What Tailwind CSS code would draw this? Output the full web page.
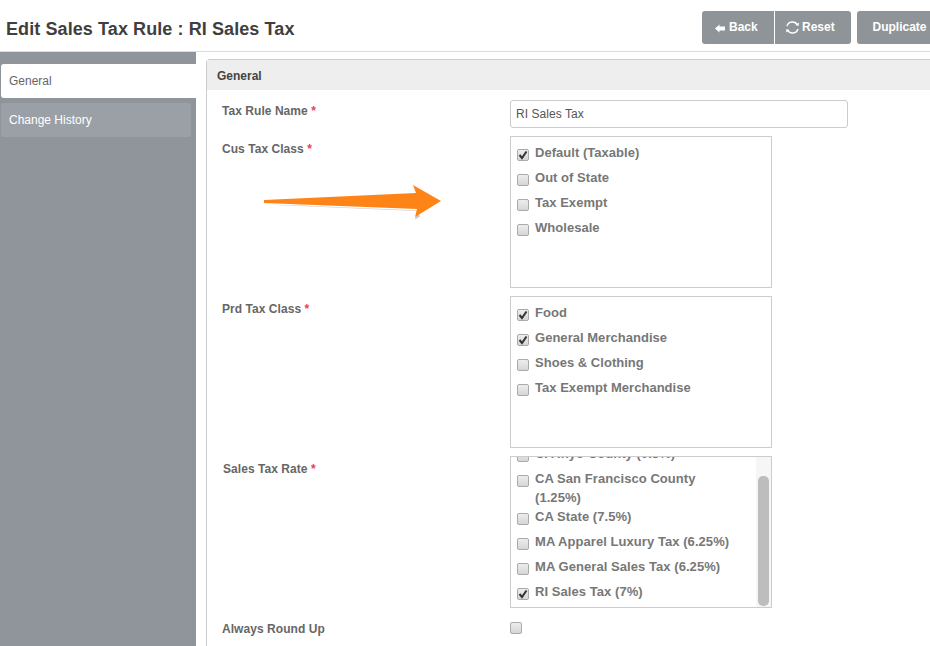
<!DOCTYPE html>
<html lang="en">

<head>
    <meta charset="UTF-8">
    <title>Edit Sales Tax Rule</title>
    <script src="https://cdn.jsdelivr.net/npm/@tailwindcss/browser@4"></script>
</head>

<body class="bg-white font-['Liberation_Sans',Arial,sans-serif] overflow-hidden">
    <div class="relative w-[930px] h-[646px] overflow-hidden">

        <!-- Header -->
        <header class="h-[52px] flex items-start justify-between border-b border-[#dcdcdc]">
            <h1 class="pl-[6px] pt-[18px] text-[18px] leading-[22px] font-bold tracking-[0.09px] text-[#3f3f3f] whitespace-nowrap">Edit Sales Tax Rule : RI Sales Tax</h1>
            <div class="flex pt-[11px] -mr-[10px]">
                <button class="w-[72px] h-[33px] pb-px pl-[13px] flex items-center gap-[4px] bg-[#8f9499] rounded-l-[3px] text-white text-[12px] font-bold">
                    <svg width="10" height="9" viewBox="0 0 10 9" class="mt-[2px]"><path d="M0 4.500 4.500 .5V2.500H10V6.500H4.500V8.500Z" fill="#fff"/></svg>
                    Back
                </button>
                <button class="w-[76px] h-[33px] ml-px pb-px pl-[10px] flex items-center gap-[2px] bg-[#8f9499] rounded-r-[3px] text-white text-[12px] font-bold">
                    <svg width="15" height="15" viewBox="0 0 15 15" fill="none" stroke="#fff" stroke-width="1.500" class="mt-px"><path d="M2 6A5.700 5.700 0 0 1 12.500 5M13 9A5.700 5.700 0 0 1 2.500 10"/><path d="M14 2.500 13.500 6 10.500 5" fill="#fff" stroke="none"/><path d="M1 12.500 1.500 9 4.500 10" fill="#fff" stroke="none"/></svg>
                    Reset
                </button>
                <button class="w-[83px] h-[33px] ml-[6px] pb-px pl-[2px] bg-[#8f9499] rounded-[3px] text-white text-[12px] font-bold">Duplicate</button>
            </div>
        </header>

        <div class="flex h-[594px]">
            <!-- Sidebar -->
            <aside class="w-[196px] shrink-0 bg-[#8f959b] pt-[12px] pl-px">
                <div class="h-[34px] flex items-center pl-[8px] bg-white rounded-l-[3px] text-[12px] text-[#666]">General</div>
                <div class="mt-[5px] mr-[5px] h-[34px] flex items-center pl-[8px] bg-[#9ba0a7] rounded-[3px] text-[12px] text-white">Change History</div>
            </aside>

            <!-- Main panel -->
            <main class="flex-1 pl-[10px] pt-[7px]">
                <section class="h-[600px] border-l border-t border-[#ccc] rounded-tl-[4px]">
                    <h2 class="h-[30px] pt-px flex items-center pl-[10px] bg-[#eeeeee] text-[12px] font-bold text-[#444]">General</h2>

                    <div class="grid grid-cols-[288px_1fr] pl-[15px] pt-[10px] text-[12px] font-bold tracking-[0.05px] text-[#666]">
                        <div class="pt-[4px] leading-[14px]">Tax Rule Name <span class="text-[#f03a5f]">*</span></div>
                        <div class="h-[36px]">
                            <div class="w-[338px] h-[28px] flex items-center pl-[5px] border border-[#ccc] rounded-[3px] font-normal text-[#555]">RI Sales Tax</div>
                        </div>

                        <div class="pt-[6px] leading-[14px]">Cus Tax Class <span class="text-[#f03a5f]">*</span></div>
                        <div class="h-[160px]">
                            <div class="w-[262px] h-[152px] border border-[#ccc] pl-[6px] pt-[3px] text-[13px] tracking-[0.03px] text-[#777]">
                                <div class="h-[25px] flex items-center gap-[6px]"><span class="w-[12px] h-[12px] mt-[5px] flex items-center justify-center border border-[#aaa] rounded-[2px] bg-linear-to-b from-[#ededed] to-[#d6d6d6]"><svg width="10" height="10" viewBox="0 0 10 10"><path d="M1.500 5 4 8 8.500 1.500" fill="none" stroke="#333" stroke-width="2"/></svg></span>Default (Taxable)</div>
                                <div class="h-[25px] flex items-center gap-[6px]"><span class="w-[12px] h-[12px] mt-[5px] border border-[#aaa] rounded-[2px] bg-linear-to-b from-[#ededed] to-[#d6d6d6]"></span>Out of State</div>
                                <div class="h-[25px] flex items-center gap-[6px]"><span class="w-[12px] h-[12px] mt-[5px] border border-[#aaa] rounded-[2px] bg-linear-to-b from-[#ededed] to-[#d6d6d6]"></span>Tax Exempt</div>
                                <div class="h-[25px] flex items-center gap-[6px]"><span class="w-[12px] h-[12px] mt-[5px] border border-[#aaa] rounded-[2px] bg-linear-to-b from-[#ededed] to-[#d6d6d6]"></span>Wholesale</div>
                            </div>
                        </div>

                        <div class="pt-[6px] leading-[14px]">Prd Tax Class <span class="text-[#f03a5f]">*</span></div>
                        <div class="h-[160px]">
                            <div class="w-[262px] h-[152px] border border-[#ccc] pl-[6px] pt-[3px] text-[13px] tracking-[0.03px] text-[#777]">
                                <div class="h-[25px] flex items-center gap-[6px]"><span class="w-[12px] h-[12px] mt-[5px] flex items-center justify-center border border-[#aaa] rounded-[2px] bg-linear-to-b from-[#ededed] to-[#d6d6d6]"><svg width="10" height="10" viewBox="0 0 10 10"><path d="M1.500 5 4 8 8.500 1.500" fill="none" stroke="#333" stroke-width="2"/></svg></span>Food</div>
                                <div class="h-[25px] flex items-center gap-[6px]"><span class="w-[12px] h-[12px] mt-[5px] flex items-center justify-center border border-[#aaa] rounded-[2px] bg-linear-to-b from-[#ededed] to-[#d6d6d6]"><svg width="10" height="10" viewBox="0 0 10 10"><path d="M1.500 5 4 8 8.500 1.500" fill="none" stroke="#333" stroke-width="2"/></svg></span>General Merchandise</div>
                                <div class="h-[25px] flex items-center gap-[6px]"><span class="w-[12px] h-[12px] mt-[5px] border border-[#aaa] rounded-[2px] bg-linear-to-b from-[#ededed] to-[#d6d6d6]"></span>Shoes &amp; Clothing</div>
                                <div class="h-[25px] flex items-center gap-[6px]"><span class="w-[12px] h-[12px] mt-[5px] border border-[#aaa] rounded-[2px] bg-linear-to-b from-[#ededed] to-[#d6d6d6]"></span>Tax Exempt Merchandise</div>
                            </div>
                        </div>

                        <div class="pt-[6px] pl-px leading-[14px]">Sales Tax Rate <span class="text-[#f03a5f]">*</span></div>
                        <div class="h-[166px]">
                            <div class="relative w-[262px] h-[152px] border border-[#ccc] pl-[6px] text-[13px] tracking-[0.06px] text-[#777] overflow-hidden flex flex-col justify-end pb-[3px]">
                                <div class="h-[25px] shrink-0 flex items-center gap-[6px]"><span class="w-[12px] h-[12px] mt-[5px] border border-[#aaa] rounded-[2px] bg-linear-to-b from-[#ededed] to-[#d6d6d6]"></span>CA Inyo County (0.5%)</div>
                                <div class="h-[38px] shrink-0 flex gap-[6px] w-[225px] leading-[19px] pt-[3px]"><span class="w-[12px] h-[12px] shrink-0 mt-[6px] border border-[#aaa] rounded-[2px] bg-linear-to-b from-[#ededed] to-[#d6d6d6]"></span><span>CA San Francisco County (1.25%)</span></div>
                                <div class="h-[25px] shrink-0 flex items-center gap-[6px]"><span class="w-[12px] h-[12px] mt-[5px] border border-[#aaa] rounded-[2px] bg-linear-to-b from-[#ededed] to-[#d6d6d6]"></span>CA State (7.5%)</div>
                                <div class="h-[25px] shrink-0 flex items-center gap-[6px]"><span class="w-[12px] h-[12px] mt-[5px] border border-[#aaa] rounded-[2px] bg-linear-to-b from-[#ededed] to-[#d6d6d6]"></span>MA Apparel Luxury Tax (6.25%)</div>
                                <div class="h-[25px] shrink-0 flex items-center gap-[6px]"><span class="w-[12px] h-[12px] mt-[5px] border border-[#aaa] rounded-[2px] bg-linear-to-b from-[#ededed] to-[#d6d6d6]"></span>MA General Sales Tax (6.25%)</div>
                                <div class="h-[25px] shrink-0 flex items-center gap-[6px]"><span class="w-[12px] h-[12px] mt-[5px] flex items-center justify-center border border-[#aaa] rounded-[2px] bg-linear-to-b from-[#ededed] to-[#d6d6d6]"><svg width="10" height="10" viewBox="0 0 10 10"><path d="M1.500 5 4 8 8.500 1.500" fill="none" stroke="#333" stroke-width="2"/></svg></span>RI Sales Tax (7%)</div>
                                <!-- Scrollbar -->
                                <div class="absolute right-0 top-0 bottom-0 w-[15px] bg-[#f6f6f6]">
                                    <div class="absolute left-[2px] right-[2px] top-[19px] bottom-px rounded-[5px] bg-[#bdbdbd]"></div>
                                </div>
                            </div>
                        </div>

                        <div class="leading-[14px]">Always Round Up</div>
                        <div><span class="block w-[12px] h-[12px] border border-[#aaa] rounded-[2px] bg-linear-to-b from-[#ededed] to-[#d6d6d6]"></span></div>
                    </div>
                </section>
            </main>
        </div>

        <!-- Annotation arrow over the form -->
        <svg class="absolute left-[260px] top-[182px]" width="186" height="40" viewBox="0 0 186 40">
            <path d="M4 21 157 27.500 155 36 160 33 158 27 40 22Z" fill="#777" opacity=".4" transform="translate(0 1.500)"/>
            <path d="M4 18 156 11 153 3 181 19 155 35 157 27 4 21Z" fill="#ff8417"/>
        </svg>
    </div>
</body>

</html>
